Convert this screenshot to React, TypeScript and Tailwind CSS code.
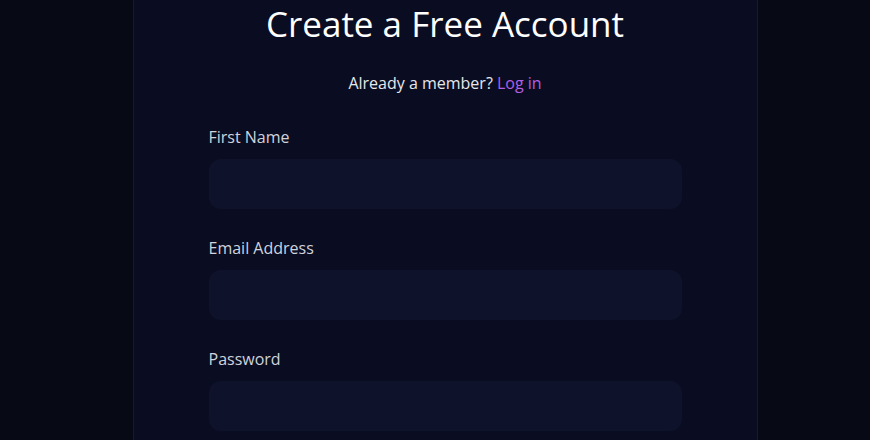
export default function App() {
  const fields = ['First Name', 'Email Address', 'Password']
  return (
    <div className="min-h-screen w-full bg-[#070a14] pl-[20px]" style={{ fontFamily: '"Open Sans", sans-serif' }}>
      <div className="mx-auto min-h-screen w-[625px] border-x border-[#131937] bg-[#0a0d22] px-[75px]">
        <h1 className="text-center text-[35px] leading-[48px] text-white">Create a Free Account</h1>
        <p className="mt-[23px] text-center text-base leading-6 text-[#e5e7eb]">
          Already a member? <a className="text-[#b15ee6]">Log in</a>
        </p>
        <form className="mt-[30px] flex flex-col gap-[27px]">
          {fields.map((f) => (
            <div key={f} className="flex flex-col">
              <label className="text-base leading-6 text-[#cfd3dc]">{f}</label>
              <input
                type={f === 'Password' ? 'password' : 'text'}
                className="mt-[10px] h-[50px] w-full rounded-xl bg-[#0e132b] px-4 text-white outline-none"
              />
            </div>
          ))}
        </form>
      </div>
    </div>
  )
}
